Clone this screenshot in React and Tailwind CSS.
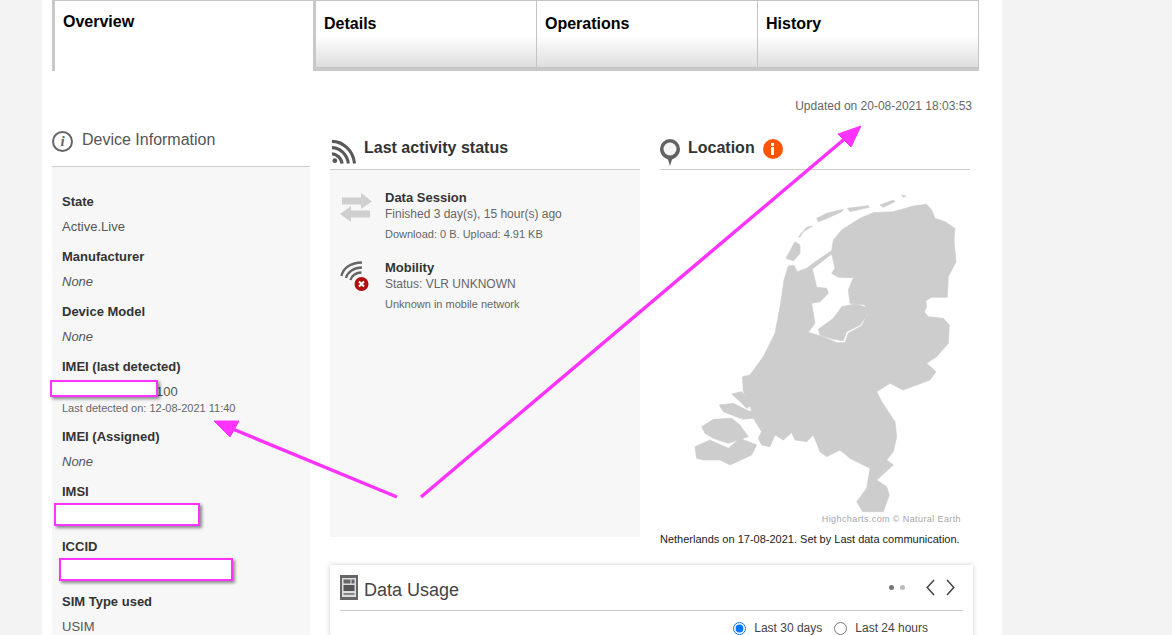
import React from "react";

function RssIcon() {
  return (
    <svg width="27" height="25" viewBox="0 0 28 26" fill="none" stroke="#595959" strokeWidth="3.200" className="shrink-0">
      <path d="M2 2.500c11 0 22 9 23.500 23" />
      <path d="M2 9c8 0 16 7 17 16.500" />
      <path d="M2 15.500c4 0 10 4 10.500 10" />
      <circle cx="5" cy="22.500" r="2.500" fill="#595959" stroke="none" />
    </svg>
  );
}

function PinIcon() {
  return (
    <svg width="20" height="27" viewBox="0 0 20 27" className="shrink-0">
      <path d="M10 0a10 10 0 0 1 10 10c0 5.500-4 9-8 10.500L10 27l-2-6.500C4 19 0 15.500 0 10A10 10 0 0 1 10 0z" fill="#616161" />
      <circle cx="10" cy="10" r="6.500" fill="#f4f4f4" />
    </svg>
  );
}

function SwapIcon() {
  return (
    <svg width="32" height="29" viewBox="0 0 32 29" fill="#cfcfcf" className="shrink-0">
      <path d="M2 4.500h19V0l11 8.500L21 16v-4.500H2z" />
      <path d="M30 17.500H11V13L0 21l11 8v-4.500h19z" />
    </svg>
  );
}

function WifiOffIcon() {
  return (
    <svg width="30" height="31" viewBox="0 0 30 31" fill="none" className="shrink-0">
      <g stroke="#666" strokeWidth="2.400">
        <path d="M1.500 16C3 8 11 2.500 22 2.500" />
        <path d="M6 18C7.500 12 14 7.500 22 7.500" />
        <path d="M10.500 20c1-4 5-7.500 11-7.500" />
      </g>
      <circle cx="21.500" cy="24" r="7" fill="#b30f0f" />
      <path d="M19 21.500l5 5m0-5l-5 5" stroke="#fff" strokeWidth="2" />
    </svg>
  );
}

function UsageIcon() {
  return (
    <svg width="18" height="25" viewBox="0 0 18 25" className="shrink-0">
      <rect width="18" height="25" fill="#666" />
      <rect x="2" y="3" width="14" height="19" fill="#ddd" />
      <rect x="3.500" y="4.500" width="7" height="4" fill="#666" />
      <rect x="11.500" y="4.500" width="3" height="4" fill="#666" />
      <rect x="3.500" y="10" width="11" height="6" fill="#555" />
      <rect x="3.500" y="18" width="11" height="2" fill="#888" />
    </svg>
  );
}

function NetherlandsMap() {
  return (
    <svg width="310" height="340" viewBox="650 190 310 340" className="block mt-[20px]">
      <g transform="translate(650 190) scale(0.33333)" fill="#cdcdcd" stroke="#cdcdcd" strokeWidth="2" strokeLinejoin="round">
        <path
          fillRule="evenodd"
          d="M248 560 270 555 310 500 345 430 362 340 372 270 385 228 402 226 412 245 440 235 470 212 515 182 520 150 545 120 600 85 640 68 700 65 760 48 800 43 815 60 825 85 855 95 885 115 882 150 888 215 865 260 862 322 815 322 797 332 800 350 793 365 805 380 850 385 868 405 865 460 830 500 800 520 828 545 810 570 730 600 690 580 650 605 665 635 705 695 710 740 700 785 680 810 700 825 650 870 680 890 688 915 670 965 608 965 590 935 620 895 630 835 570 805 540 780 500 800 480 785 460 735 440 755 405 750 395 728 370 750 345 735 330 770 305 765 295 745 305 725 280 685 245 688 275 660 250 605 248 570Z
          M457 237 515 192 525 235 515 250 535 262 580 263 565 300 570 340 615 345 622 375 605 407 565 430 555 458 530 458 490 440 445 427 465 400 455 340 480 335 505 310 500 295 470 292Z"
        />
        <path d="M545 350 585 342 618 352 620 378 600 405 560 425 550 452 520 448 480 435 475 418 520 385 535 365Z" />
        <path d="M378 205 405 155 420 165 420 190 400 212Z" />
        <path d="M415 140 440 112 458 108 430 125 420 142Z" />
        <path d="M470 85 500 70 550 58 545 65 490 90 475 95Z" />
        <path d="M562 55 625 47 628 52 570 65Z" />
        <path d="M660 45 700 30 705 35 670 52Z" />
        <path d="M725 15 738 18 730 22Z" />
        <path d="M105 770 150 750 205 775 240 745 290 765 275 795 210 825 180 810 130 810 110 805Z" />
        <path d="M125 710 160 688 215 685 240 705 265 740 205 760 160 745 135 730Z" />
        <path d="M178 645 220 640 270 665 275 680 240 685 190 665Z" />
        <path d="M215 612 245 605 275 645 260 655 235 630Z" />
      </g>
    </svg>
  );
}

const fields = [
  { label: "State", value: "Active.Live" },
  { label: "Manufacturer", none: true },
  { label: "Device Model", none: true },
  { label: "IMEI (last detected)", value: "100", note: "Last detected on: 12-08-2021 11:40", box: "left-[-12px] top-[-4px] w-[108px] h-[17px]", pad: true },
  { label: "IMEI (Assigned)", none: true },
  { label: "IMSI", box: "left-[-8px] top-[-6px] w-[146px] h-[23px]" },
  { label: "ICCID", box: "left-[-3px] top-[-6px] w-[174px] h-[23px]" },
  { label: "SIM Type used", value: "USIM" },
];

function Field({ f }) {
  return (
    <div className={f.note ? "h-[70px]" : "h-[55px]"}>
      <div className="h-[26px] text-[13px] leading-[18px] font-bold text-[#333]">{f.label}</div>
      <div className="relative h-[15px] text-[13px] leading-[15px] text-[#555]">
        {f.none ? <i>None</i> : <span className={f.pad ? "pl-[94px]" : ""}>{f.value}</span>}
        {f.box && (
          <div className={`absolute bg-white border-2 border-[#ff33ff] shadow-[2px_2px_3px_rgba(0,0,0,0.45)] ${f.box}`} />
        )}
      </div>
      {f.note && <div className="mt-[2px] text-[11px] leading-[15px] text-[#666]">{f.note}</div>}
    </div>
  );
}

function Tab({ children, className }) {
  return (
    <div className={`h-[68px] border-t border-r border-b border-[#c4c4c4] pl-[8px] pt-[13px] text-[16px] leading-[20px] font-bold text-black bg-[linear-gradient(#fff_0,#fff_52%,#dedede_100%)] ${className}`}>
      {children}
    </div>
  );
}

export default function App() {
  return (
    <div className="relative h-[635px] overflow-hidden bg-[#f3f3f3] font-['Liberation_Sans',Arial,sans-serif]">
      <div className="ml-[42px] w-[960px] h-full bg-white pl-[10px]">
        {/* tabs */}
        <div className="flex w-[927px] h-[71px] items-start">
          <div className="w-[261px] h-[71px] border-l-[3px] border-t border-[#c8c8c8] pl-[8px] pt-[11px] text-[16px] leading-[20px] font-bold text-black">
            Overview
          </div>
          <div className="flex-1 h-[71px] border-b-[3px] border-[#c8c8c8] border-l-[3px] flex">
            <Tab className="w-[221px]">Details</Tab>
            <Tab className="w-[221px]">Operations</Tab>
            <Tab className="flex-1">History</Tab>
          </div>
        </div>

        <div className="flex">
          {/* device info */}
          <div className="w-[258px] shrink-0 pt-[58px]">
            <div className="flex items-center gap-[9px] h-[38px] pb-[12px] border-b border-[#ccc] text-[16px] text-[#555]">
              <span className="w-[21px] h-[21px] rounded-full border-[2px] border-[#666] flex items-center justify-center font-['Liberation_Serif',serif] italic font-bold text-[15px] text-[#666]">
                i
              </span>
              <span className="mb-[4px]">Device Information</span>
            </div>
            <div className="bg-[#f7f7f7] h-[600px] pl-[10px] pt-[26px]">
              {fields.map((f) => (
                <Field key={f.label} f={f} />
              ))}
            </div>
          </div>

          <div className="ml-[20px] w-[643px]">
            <div className="h-[68px] pt-[28px] pr-[1px] text-right text-[12px] leading-[15px] text-[#666]">
              Updated on 20-08-2021 18:03:53
            </div>

            <div className="flex gap-[20px]">
              {/* activity */}
              <div className="w-[310px]">
                <div className="flex items-start gap-[7px] h-[31px] border-b border-[#ccc] text-[16px] leading-[18px] font-bold text-[#333]">
                  <RssIcon />
                  <span>Last activity status</span>
                </div>
                <div className="bg-[#f7f7f7] h-[367px] pl-[10px] pt-[20px]">
                  <div className="flex gap-[13px] h-[70px]">
                    <div className="pt-[3px]"><SwapIcon /></div>
                    <div>
                      <div className="text-[13px] leading-[15px] font-bold text-[#333]">Data Session</div>
                      <div className="mt-[2px] text-[12px] leading-[15px] text-[#666]">Finished 3 day(s), 15 hour(s) ago</div>
                      <div className="mt-[5px] text-[11px] leading-[15px] text-[#666]">Download: 0 B. Upload: 4.91 KB</div>
                    </div>
                  </div>
                  <div className="flex gap-[15px]">
                    <WifiOffIcon />
                    <div>
                      <div className="text-[13px] leading-[15px] font-bold text-[#333]">Mobility</div>
                      <div className="mt-[2px] text-[12px] leading-[15px] text-[#666]">Status: VLR UNKNOWN</div>
                      <div className="mt-[5px] text-[11px] leading-[15px] text-[#666]">Unknown in mobile network</div>
                    </div>
                  </div>
                </div>
              </div>

              {/* location */}
              <div className="w-[310px]">
                <div className="flex items-start gap-[8px] h-[31px] border-b border-[#ccc] text-[16px] leading-[18px] font-bold text-[#333]">
                  <PinIcon />
                  <span>Location</span>
                  <span className="w-[20px] h-[20px] rounded-full bg-[#ff5500] flex flex-col items-center justify-center gap-[1px]">
                    <span className="w-[3px] h-[3px] bg-white" />
                    <span className="w-[3px] h-[8px] bg-white" />
                  </span>
                </div>
                <NetherlandsMap />
                <div className="relative -mt-[17px] pr-[9px] text-right text-[9px] leading-[12px] text-[#a6a6a6] tracking-[0.4px]">
                  Highcharts.com © Natural Earth
                </div>
                <div className="mt-[7px] text-[11px] leading-[14px] text-[#222]">
                  Netherlands on 17-08-2021. Set by Last data communication.
                </div>
              </div>
            </div>

            {/* data usage card */}
            <div className="mt-[19px] w-[643px] h-[120px] bg-white px-[10px] shadow-[0_0_5px_rgba(0,0,0,0.2)]">
              <div className="flex items-center h-[46px] border-b border-[#ccc]">
                <UsageIcon />
                <span className="ml-[6px] mt-[5px] text-[18px] text-[#444]">Data Usage</span>
                <div className="ml-auto flex items-center">
                  <span className="w-[5px] h-[5px] rounded-full bg-[#777]" />
                  <span className="ml-[6px] w-[5px] h-[5px] rounded-full bg-[#bbb]" />
                  <svg width="9" height="17" viewBox="0 0 9 17" fill="none" stroke="#444" strokeWidth="1.500" className="ml-[21px]"><path d="M8 1L1.200 8.500 8 16" /></svg>
                  <svg width="9" height="17" viewBox="0 0 9 17" fill="none" stroke="#444" strokeWidth="1.500" className="ml-[11px] mr-[8px]"><path d="M1 1l6.800 7.500L1 16" /></svg>
                </div>
              </div>
              <div className="flex items-center justify-end gap-[5px] mt-[8px] pr-[35px] text-[12px] text-[#444]">
                <input type="radio" name="range" defaultChecked className="m-0" />
                <span className="ml-[3px]">Last 30 days</span>
                <input type="radio" name="range" className="m-0 ml-[7px]" />
                <span className="ml-[3px]">Last 24 hours</span>
              </div>
            </div>
          </div>
        </div>
      </div>

      {/* annotation arrows drawn over the screenshot */}
      <svg width="1172" height="635" className="absolute left-0 top-0 pointer-events-none" fill="#ff33ff" stroke="#ff33ff">
        <path d="M397 497 228 427" strokeWidth="3.500" fill="none" />
        <path d="M214 421 239 421 230 437Z" strokeWidth="1" />
        <path d="M421 497 848 136" strokeWidth="3.500" fill="none" />
        <path d="M861 126 851 147 838 134Z" strokeWidth="1" />
      </svg>
    </div>
  );
}
